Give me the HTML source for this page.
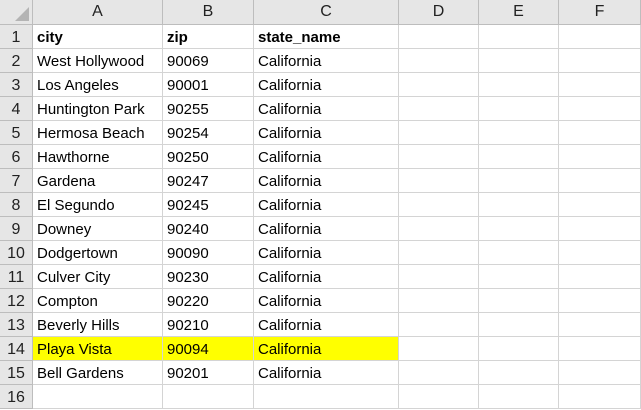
<!DOCTYPE html><html><head><style>
body{margin:0;width:641px;height:410px;overflow:hidden;background:#fff;font-family:"Liberation Sans",Carlito,sans-serif;}
.g{display:grid;grid-template-columns:33px 130px 91px 145px 80px 80px 82px;grid-template-rows:25px repeat(16,24px);}
.g div{box-sizing:border-box;border-right:1px solid #d4d4d4;border-bottom:1px solid #d4d4d4;font-size:15px;line-height:22px;padding-top:2px;padding-left:4px;white-space:nowrap;overflow:hidden;color:#000}
.g .h{background:#e6e6e6;text-align:center;padding:1px 0 0 0;border-color:#bdbdbd;color:#222;font-size:16px}
.g .r{background:#e6e6e6;text-align:center;padding:2px 0 0 0;border-color:#bdbdbd;color:#222;font-size:16px}
.b{font-weight:bold}.y{background:#ffff00}
.c{position:relative}.c:after{content:"";position:absolute;right:3px;bottom:3px;border-style:solid;border-width:0 0 14px 14px;border-color:transparent transparent #b4b4b4 transparent}
</style></head><body><div class="g" id="g">
<div class="h c"></div><div class="h">A</div><div class="h">B</div><div class="h">C</div><div class="h">D</div><div class="h">E</div><div class="h">F</div>
<div class="r">1</div><div class="b">city</div><div class="b">zip</div><div class="b">state_name</div><div></div><div></div><div></div>
<div class="r">2</div><div>West Hollywood</div><div>90069</div><div>California</div><div></div><div></div><div></div>
<div class="r">3</div><div>Los Angeles</div><div>90001</div><div>California</div><div></div><div></div><div></div>
<div class="r">4</div><div>Huntington Park</div><div>90255</div><div>California</div><div></div><div></div><div></div>
<div class="r">5</div><div>Hermosa Beach</div><div>90254</div><div>California</div><div></div><div></div><div></div>
<div class="r">6</div><div>Hawthorne</div><div>90250</div><div>California</div><div></div><div></div><div></div>
<div class="r">7</div><div>Gardena</div><div>90247</div><div>California</div><div></div><div></div><div></div>
<div class="r">8</div><div>El Segundo</div><div>90245</div><div>California</div><div></div><div></div><div></div>
<div class="r">9</div><div>Downey</div><div>90240</div><div>California</div><div></div><div></div><div></div>
<div class="r">10</div><div>Dodgertown</div><div>90090</div><div>California</div><div></div><div></div><div></div>
<div class="r">11</div><div>Culver City</div><div>90230</div><div>California</div><div></div><div></div><div></div>
<div class="r">12</div><div>Compton</div><div>90220</div><div>California</div><div></div><div></div><div></div>
<div class="r">13</div><div>Beverly Hills</div><div>90210</div><div>California</div><div></div><div></div><div></div>
<div class="r">14</div><div class="y">Playa Vista</div><div class="y">90094</div><div class="y">California</div><div></div><div></div><div></div>
<div class="r">15</div><div>Bell Gardens</div><div>90201</div><div>California</div><div></div><div></div><div></div>
<div class="r">16</div><div></div><div></div><div></div><div></div><div></div><div></div>
</div></body></html>
